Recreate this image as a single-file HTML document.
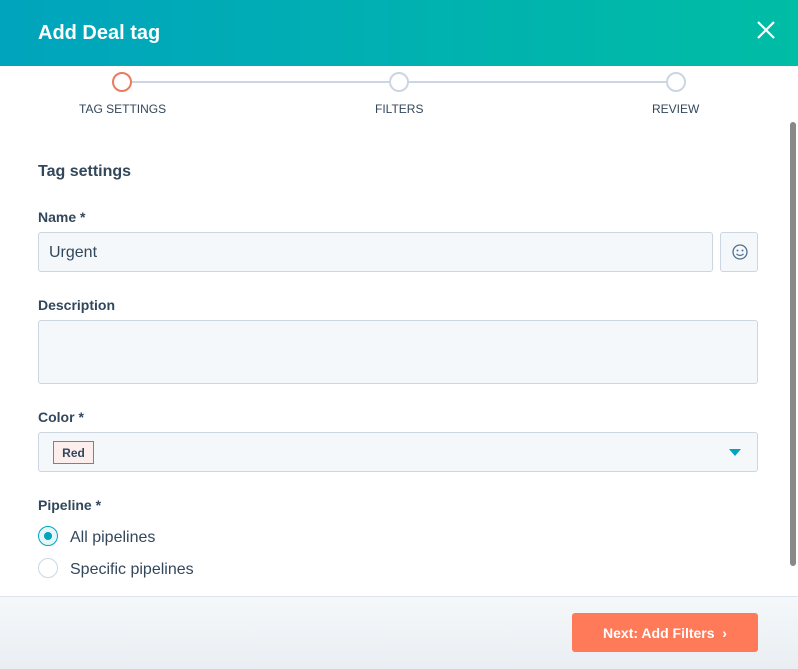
<!DOCTYPE html>
<html><head><style>
*{margin:0;padding:0;box-sizing:border-box}
body{width:798px;height:669px;overflow:hidden;background:#fff;font-family:"Liberation Sans",sans-serif;color:#33475b;position:relative}
.hdr{position:absolute;left:0;top:0;width:798px;height:66px;background:linear-gradient(90deg,#00a4bd,#00bda5)}
.hdr h1{position:absolute;left:38px;top:22px;font-size:20px;color:#fff;font-weight:bold}
.x{position:absolute;left:756px;top:20px}
.step{position:absolute;width:20px;height:20px;border-radius:50%;border:2px solid #cbd6e2;background:#fff;top:72px}
.line{position:absolute;top:81px;height:2px;background:#cbd6e2;left:131px;width:536px}
.sl{position:absolute;top:102px;font-size:12px;color:#33475b}
.lbl{position:absolute;left:38px;font-size:14px;font-weight:bold}
.inp{position:absolute;left:38px;background:#f5f8fa;border:1px solid #cbd6e2;border-radius:3px}
.radio{position:absolute;left:38px;width:20px;height:20px;border-radius:50%;border:1px solid #cbd6e2;background:#fff}
.rt{position:absolute;left:70px;font-size:16px}
.foot{position:absolute;left:0;top:596px;width:798px;height:73px;background:linear-gradient(#f5f8fa,#eaeef2);border-top:1px solid #dfe3eb}
.btn{position:absolute;left:572px;top:613px;width:186px;height:39px;background:#ff7a59;border-radius:3px;color:#fff;font-weight:bold;font-size:14px;text-align:center;line-height:40px}
.sb{position:absolute;left:790px;top:122px;width:6px;height:444px;background:#888;border-radius:3px}
</style></head><body>
<div class="hdr"><h1>Add Deal tag</h1>
<svg class="x" width="20" height="20" viewBox="0 0 20 20"><path d="M2 2L18 18M18 2L2 18" stroke="#fff" stroke-width="2.2"/></svg></div>
<div class="line"></div>
<div class="step" style="left:112px;border-color:#ea7b5c"></div>
<div class="step" style="left:389px"></div>
<div class="step" style="left:666px"></div>
<div class="sl" style="left:79px">TAG SETTINGS</div>
<div class="sl" style="left:375px">FILTERS</div>
<div class="sl" style="left:652px">REVIEW</div>
<div class="lbl" style="top:163px;font-size:16px">Tag settings</div>
<div class="lbl" style="top:209px">Name *</div>
<div class="inp" style="top:232px;width:675px;height:40px;padding:11px 10px;font-size:16px">Urgent</div>
<div class="inp" style="top:232px;left:720px;width:38px;height:40px"><svg width="38" height="38" viewBox="0 0 38 38"><circle cx="19" cy="19" r="7" fill="none" stroke="#516f90" stroke-width="1.3"/><circle cx="16.5" cy="17.5" r="1" fill="#516f90"/><circle cx="21.5" cy="17.5" r="1" fill="#516f90"/><path d="M15.5 21q3.5 3 7 0" fill="none" stroke="#516f90" stroke-width="1.2"/></svg></div>
<div class="lbl" style="top:297px">Description</div>
<div class="inp" style="top:320px;width:720px;height:64px"></div>
<div class="lbl" style="top:409px">Color *</div>
<div class="inp" style="top:432px;width:720px;height:40px"><div style="position:absolute;left:14px;top:8px;width:41px;height:23px;border:1px solid #e0585a;background:#fdeeee;font-size:12px;font-weight:bold;line-height:22px;text-align:center">Red</div>
<svg style="position:absolute;left:690px;top:16px" width="12" height="7"><path d="M0 0H12L6 7Z" fill="#00a4bd"/></svg></div>
<div class="lbl" style="top:497px">Pipeline *</div>
<div class="radio" style="top:526px;border:1px solid #00a4bd;background:#e5f5f8"><div style="position:absolute;left:5px;top:5px;width:8px;height:8px;border-radius:50%;background:#00a4bd"></div></div>
<div class="rt" style="top:529px">All pipelines</div>
<div class="radio" style="top:558px"></div>
<div class="rt" style="top:561px">Specific pipelines</div>
<div class="sb"></div>
<div class="foot"></div>
<div class="btn">Next: Add Filters &nbsp;›</div>
</body></html>
